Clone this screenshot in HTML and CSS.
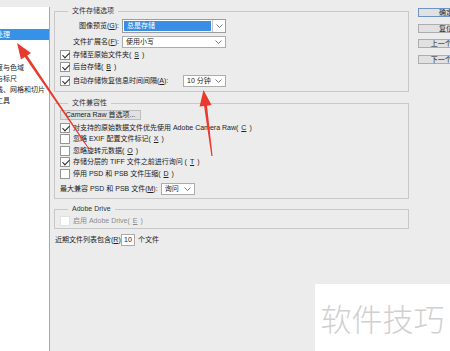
FILE: index.html
```html
<!DOCTYPE html>
<html lang="zh-CN">
    <head>
        <meta charset="UTF-8">
        <meta name="viewport" content="width=device-width, initial-scale=1.0">
        <link rel="stylesheet" href="styles.css">
        <title>首选项 - 文件处理</title>
    </head>
    <body>
        <div class="window">
            <ul class="nav">
                <li></li>
                <li></li>
                <li class="sel"><span>文件处理</span></li>
                <li></li>
                <li></li>
                <li><span>透明度与色域</span></li>
                <li><span>单位与标尺</span></li>
                <li><span>参考线、网格和切片</span></li>
                <li><span>增效工具</span></li>
            </ul>

            <div class="panel">
                <fieldset class="group g-save">
                    <legend>文件存储选项</legend>

                    <div class="row">
                        <span class="lbl">图像预览(<u>G</u>):</span>
                        <div class="select wide focus">
                            <span class="val">总是存储</span>
                            <span class="arrow"><svg width="7" height="4" viewBox="0 0 7 4"><polyline points="0.5,0.5 3.5,3.5 6.5,0.5" fill="none" stroke="#555" stroke-width="0.8"/></svg></span>
                        </div>
                    </div>

                    <div class="row gap">
                        <span class="lbl">文件扩展名(<u>F</u>):</span>
                        <div class="select wide">
                            <span class="val">使用小写</span>
                            <span class="arrow"><svg width="7" height="4" viewBox="0 0 7 4"><polyline points="0.5,0.5 3.5,3.5 6.5,0.5" fill="none" stroke="#555" stroke-width="0.8"/></svg></span>
                        </div>
                    </div>

                    <div class="check"><span class="box on"></span>存储至原始文件夹(<u>S</u>)</div>
                    <div class="check"><span class="box on"></span>后台存储(<u>B</u>)</div>

                    <div class="check autosave">
                        <span class="box on"></span>
                        <span class="grow">自动存储恢复信息时间间隔(<u>A</u>):</span>
                        <div class="select minutes">
                            <span class="val">10 分钟</span>
                            <span class="arrow"><svg width="7" height="4" viewBox="0 0 7 4"><polyline points="0.5,0.5 3.5,3.5 6.5,0.5" fill="none" stroke="#555" stroke-width="0.8"/></svg></span>
                        </div>
                    </div>
                </fieldset>

                <fieldset class="group g-compat">
                    <legend>文件兼容性</legend>

                    <button class="raw-btn" type="button">Camera Raw 首选项...</button>

                    <div class="check tall"><span class="box on"></span>对支持的原始数据文件优先使用 Adobe Camera Raw(<u>C</u>)</div>
                    <div class="check tall"><span class="box"></span>忽略 EXIF 配置文件标记(<u>X</u>)</div>
                    <div class="check tall"><span class="box"></span>忽略旋转元数据(<u>O</u>)</div>
                    <div class="check tall"><span class="box on"></span>存储分层的 TIFF 文件之前进行询问 (<u>T</u>)</div>
                    <div class="check tall"><span class="box"></span>停用 PSD 和 PSB 文件压缩(<u>D</u>)</div>

                    <div class="row compat">
                        <span>最大兼容 PSD 和 PSB 文件(<u>M</u>):</span>
                        <div class="select ask">
                            <span class="val">询问</span>
                            <span class="arrow"><svg width="7" height="4" viewBox="0 0 7 4"><polyline points="0.5,0.5 3.5,3.5 6.5,0.5" fill="none" stroke="#555" stroke-width="0.8"/></svg></span>
                        </div>
                    </div>
                </fieldset>

                <fieldset class="group g-drive">
                    <legend>Adobe Drive</legend>
                    <div class="check off"><span class="box"></span>启用 Adobe Drive(<u>E</u>)</div>
                </fieldset>

                <div class="recent">
                    <span class="recent-lbl">近期文件列表包含(<u>R</u>):</span>
                    <span class="num">10</span>
                    <span>个文件</span>
                </div>
            </div>

            <div class="buttons">
                <button class="btn default" type="button">确定</button>
                <button class="btn" type="button">复位</button>
                <button class="btn" type="button">上一个(P)</button>
                <button class="btn" type="button">下一个(N)</button>
            </div>
        </div>

        <div class="watermark">软件技巧</div>

        <svg class="arrows" width="450" height="351" viewBox="0 0 450 351">
            <polygon points="17,43 31,52.9 27.2,55.4 89.4,148.7 88.6,149.3 24.8,57.1 21,59.6" fill="#e63b2e"/>
            <polygon points="203.5,90 211.5,105.1 207,105.7 212.6,155.9 211.4,156.1 204.1,106.1 199.6,106.6" fill="#e63b2e"/>
        </svg>
    </body>
</html>
```

FILE: styles.css
```css
* {
    box-sizing: border-box;
}

html, body {
    margin: 0;
}

body {
    position: relative;
    width: 450px;
    height: 351px;
    overflow: hidden;
    background: #ececec;
    font-family: "Liberation Sans", "Noto Sans CJK SC", sans-serif;
    font-size: 7px;
    line-height: 10px;
    color: #222;
}

u {
    text-decoration: underline;
}

.window {
    display: flex;
    height: 351px;
}

/* left list, only its right end is visible */
.nav {
    list-style: none;
    margin: 7px 0 0;
    padding: 0;
    width: 50px;
    flex: none;
    background: #fff;
    border-right: 1px solid #a9a9a9;
    overflow: hidden;
}

.nav li {
    height: 11px;
    line-height: 11px;
    white-space: nowrap;
}

.nav li span {
    margin-left: -18px;
}

.nav .sel {
    background: #3592e6;
    color: #fff;
}

.panel {
    width: 359px;
    flex: none;
    padding: 6px 0 0 4px;
}

.group {
    width: 355px;
    min-width: 0;
    margin: 0;
    border: 1px solid #c8c8c8;
    padding: 0 5px 3px;
}

.group legend {
    margin-left: 8px;
    padding: 0 4px;
    height: 10px;
    line-height: 10px;
    color: #333;
}

.g-save {
    padding-top: 3px;
}

.g-compat {
    margin-top: 6px;
    padding-top: 2px;
}

.g-drive {
    margin-top: 5px;
    padding-top: 1px;
    padding-bottom: 2px;
}

.row {
    display: flex;
    align-items: center;
    height: 14px;
}

.row.gap {
    margin-top: 2px;
}

.lbl {
    width: 59px;
    margin-right: 3px;
    text-align: right;
    white-space: nowrap;
}

.select {
    display: flex;
    height: 12px;
    border: 1px solid #acacac;
    background: #fff;
    white-space: nowrap;
}

.select .val {
    flex: 1;
    padding-left: 3px;
    line-height: 10px;
}

.select .arrow {
    width: 13px;
    display: flex;
    align-items: center;
    justify-content: center;
}

.select.wide {
    width: 104px;
}

.select.focus {
    height: 14px;
    border-color: #9c9c9c;
}

.select.focus .val {
    margin: 1px;
    background: #3b8ee6;
    color: #fff;
    line-height: 10px;
}

.select.focus .arrow {
    border-left: 1px solid #c4c4c4;
}

.select.minutes {
    width: 43px;
}

.select.ask {
    width: 34px;
    margin-left: 3px;
}

.check {
    display: flex;
    align-items: center;
    gap: 3px;
    height: 12px;
    white-space: nowrap;
}

.check.tall {
    height: 11.5px;
}

.check.autosave {
    width: 166px;
    height: 14px;
    margin-top: 1px;
}

.check .grow {
    flex: 1;
}

.box {
    position: relative;
    flex: none;
    width: 10px;
    height: 10px;
    border: 1px solid #969696;
    background: #fff;
}

.box.on::after {
    content: "";
    position: absolute;
    left: 3px;
    top: 0;
    width: 3px;
    height: 6px;
    border: solid #2a2a2a;
    border-width: 0 1px 1px 0;
    transform: rotate(45deg);
}

.check.off {
    height: 11px;
    color: #8c8c8c;
}

.check.off .box {
    border-color: #e2e2e2;
}

.raw-btn {
    display: block;
    width: 81px;
    height: 10px;
    margin: 0 0 2px;
    padding: 0;
    border: 1px solid #bdbdbd;
    background: #e1e1e1;
    font-family: inherit;
    font-size: 7px;
    line-height: 8px;
    color: #222;
}

.row.compat {
    height: 13px;
    margin-top: 2.5px;
    white-space: nowrap;
}

.recent {
    display: flex;
    align-items: center;
    height: 12px;
    margin: 5px 0 0 1px;
    white-space: nowrap;
}

.recent-lbl {
    width: 64px;
    margin-right: 2px;
}

.num {
    width: 14px;
    height: 12px;
    margin-right: 3px;
    padding-left: 2px;
    border: 1px solid #acacac;
    background: #fff;
}

.buttons {
    display: flex;
    flex-direction: column;
    gap: 6.5px;
    flex: none;
    margin-left: 9px;
    padding-top: 8px;
}

.btn {
    width: 56px;
    height: 9px;
    padding: 0;
    border: 1px solid #adadad;
    background: #e1e1e1;
    font-family: inherit;
    font-size: 7px;
    line-height: 7px;
    color: #222;
}

.btn.default {
    border-color: #6f93c4;
}

.watermark {
    position: absolute;
    left: 315px;
    top: 284px;
    width: 135px;
    height: 67px;
    display: flex;
    align-items: center;
    justify-content: center;
    background: #fff;
    font-family: "Noto Sans CJK SC", sans-serif;
    font-size: 31px;
    line-height: 31px;
    font-weight: 300;
    color: #d0d0d0;
    white-space: nowrap;
}

.arrows {
    position: absolute;
    left: 0;
    top: 0;
    pointer-events: none;
}
```
